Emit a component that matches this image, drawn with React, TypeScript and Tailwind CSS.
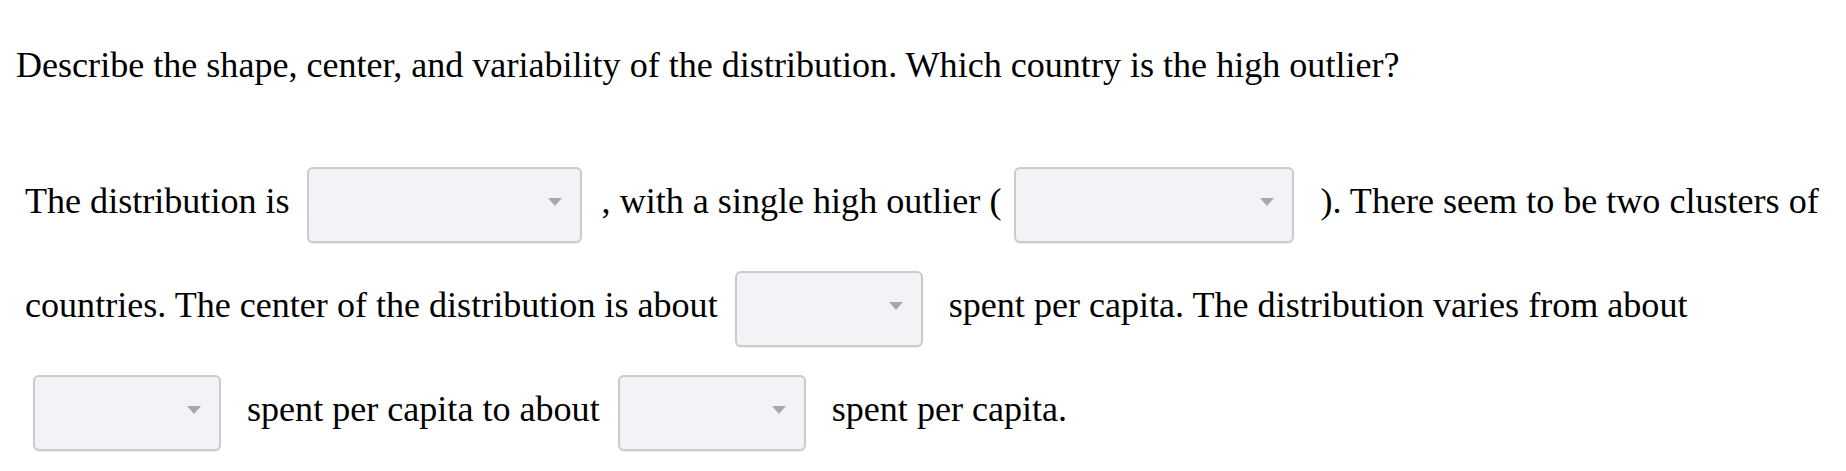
import React from 'react';

type DropdownProps = {
  width: string;
  gap: string;
};

// Empty answer box with a small grey caret on the right
const Dropdown = ({ width, gap }: DropdownProps) => (
  <span
    role="combobox"
    className={`inline-flex h-[76px] ${width} ${gap} items-center justify-end rounded-[6px] border-2 border-[#cbcbcb] bg-[#f2f3f7] pr-[18px] align-middle shadow-[0_1px_1px_rgba(0,0,0,0.08)]`}
  >
    <svg width="14" height="8" viewBox="0 0 14 8" className="mb-[6px]">
      <path d="M0 0 L14 0 L7 8 Z" fill="#a8a8a8" />
    </svg>
  </span>
);

const App = () => {
  return (
    <div className="h-[471px] w-[1846px] overflow-hidden bg-white font-['Liberation_Serif','Times_New_Roman',serif] text-black">
      <p className="pl-4 pt-[45px] text-[36.1px] leading-[41px]">
        Describe the shape, center, and variability of the distribution. Which country is the high outlier?
      </p>

      <p className="mt-[63px] pl-[25px] text-[36.1px] leading-[104px]">
        The distribution is <Dropdown width="w-[275px]" gap="ml-[8px] mr-[11px]" /> , with a single high outlier (
        <Dropdown width="w-[280px]" gap="ml-[13px] mr-[17px]" /> ). There seem to be two clusters of countries. The
        center of the distribution is about <Dropdown width="w-[188px]" gap="ml-[8px] mr-[17px]" /> spent per capita.
        The distribution varies from about <Dropdown width="w-[188px]" gap="ml-[8px] mr-[17px]" /> spent per capita to
        about <Dropdown width="w-[188px]" gap="ml-[9px] mr-[17px]" /> spent per capita.
      </p>
    </div>
  );
};

export default App;
